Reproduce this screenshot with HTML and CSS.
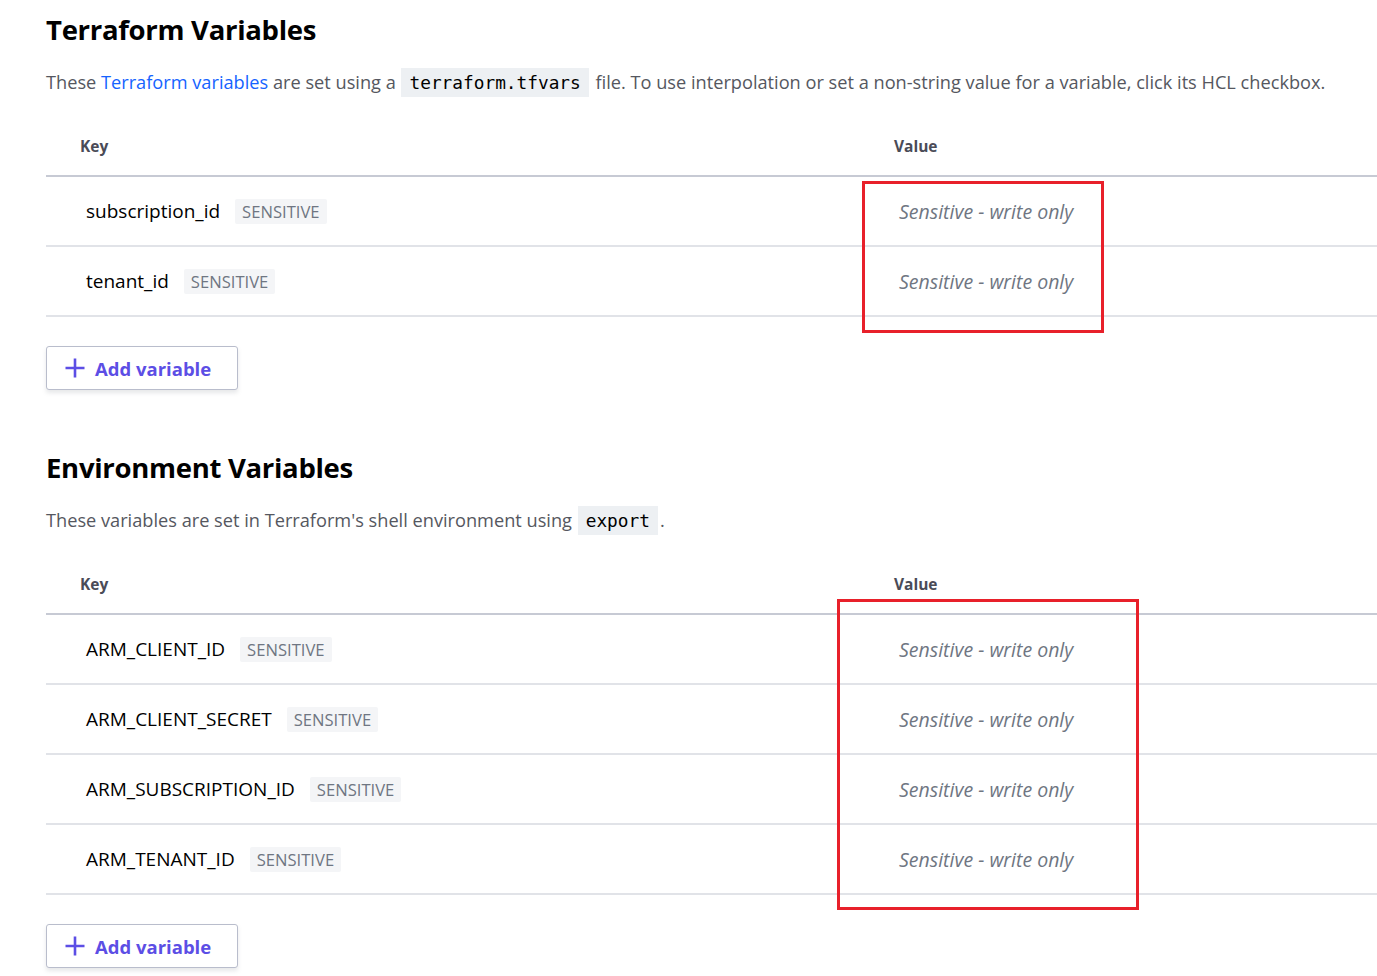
FILE: index.html
```html
<!DOCTYPE html>
<html>
<head>
<meta charset="utf-8">
<link rel="stylesheet" href="styles.css">
</head>
<body>
<div class="page">
  <section class="section s1">
    <h2 class="title">Terraform Variables</h2>
    <p class="desc">These <a class="link" href="#">Terraform variables</a> are set using a <code class="code">terraform.tfvars</code> file. To use interpolation or set a non-string value for a variable, click its HCL checkbox.</p>
    <div class="table-wrap">
      <div class="thead">
        <div class="th th-key">Key</div>
        <div class="th th-val">Value</div>
      </div>
      <div class="row">
        <div class="cell-key"><span class="key">subscription_id</span><span class="badge">SENSITIVE</span></div>
        <div class="cell-val">Sensitive - write only</div>
      </div>
      <div class="row">
        <div class="cell-key"><span class="key">tenant_id</span><span class="badge">SENSITIVE</span></div>
        <div class="cell-val">Sensitive - write only</div>
      </div>
      <div class="highlight h1"></div>
    </div>
    <button class="btn"><svg class="plus" width="20" height="20" viewBox="0 0 20 20"><path d="M10 0.5v19M0.5 10h19" stroke="currentColor" stroke-width="2.6" fill="none"/></svg><span>Add variable</span></button>
  </section>

  <section class="section s2">
    <h2 class="title">Environment Variables</h2>
    <p class="desc">These variables are set in Terraform's shell environment using <code class="code">export</code>.</p>
    <div class="table-wrap">
      <div class="thead">
        <div class="th th-key">Key</div>
        <div class="th th-val">Value</div>
      </div>
      <div class="row">
        <div class="cell-key"><span class="key">ARM_CLIENT_ID</span><span class="badge">SENSITIVE</span></div>
        <div class="cell-val">Sensitive - write only</div>
      </div>
      <div class="row">
        <div class="cell-key"><span class="key">ARM_CLIENT_SECRET</span><span class="badge">SENSITIVE</span></div>
        <div class="cell-val">Sensitive - write only</div>
      </div>
      <div class="row">
        <div class="cell-key"><span class="key">ARM_SUBSCRIPTION_ID</span><span class="badge">SENSITIVE</span></div>
        <div class="cell-val">Sensitive - write only</div>
      </div>
      <div class="row">
        <div class="cell-key"><span class="key">ARM_TENANT_ID</span><span class="badge">SENSITIVE</span></div>
        <div class="cell-val">Sensitive - write only</div>
      </div>
      <div class="highlight h2"></div>
    </div>
    <button class="btn"><svg class="plus" width="20" height="20" viewBox="0 0 20 20"><path d="M10 0.5v19M0.5 10h19" stroke="currentColor" stroke-width="2.6" fill="none"/></svg><span>Add variable</span></button>
  </section>
</div>
</body>
</html>
```

FILE: styles.css
```css
* { box-sizing: border-box; }
html, body { margin: 0; padding: 0; background: #fff; }
body {
  font-family: "Open Sans", "Noto Sans", sans-serif;
  color: #000;
  overflow: hidden;
  width: 1377px;
  height: 976px;
}
.page {
  padding-left: 46px;
  padding-top: 10px;
}
.section { display: flex; flex-direction: column; align-items: flex-start; }
.s2 { margin-top: 58px; }
.title {
  margin: 0;
  font-size: 27.5px;
  font-weight: 700;
  line-height: 40px;
  letter-spacing: -0.3px;
}
.desc {
  margin: 16px 0 0;
  font-size: 18.2px;
  line-height: 32px;
  color: #555760;
  white-space: nowrap;
}
.link { color: #1563ff; text-decoration: none; }
.code {
  font-family: "DejaVu Sans Mono", monospace;
  font-size: 17.8px;
  color: #000;
  background: #edf0f3;
  padding: 4px 8px;
  margin: 0 2px 0 1px;
}
.table-wrap {
  position: relative;
  width: 1331px;
  margin-top: 29px;
}
.thead {
  display: grid;
  grid-template-columns: 848px 1fr;
  height: 49px;
  align-items: end;
  padding-bottom: 18px;
  border-bottom: 2px solid #c7cad4;
  font-size: 15.5px;
  line-height: 21px;
  font-weight: 700;
  color: #4a4b57;
}
.th-key { padding-left: 34px; }
.row {
  display: grid;
  grid-template-columns: 848px 1fr;
  height: 70px;
  align-items: center;
  border-bottom: 2px solid #e1e3e8;
}
.cell-key { padding-left: 40px; display: flex; align-items: center; }
.key { font-size: 19px; color: #000; }
.badge {
  margin-left: 15px;
  background: #f4f5f7;
  color: #6f7682;
  font-size: 16.6px;
  padding: 0 7px;
  height: 25px;
  line-height: 25px;
  border-radius: 2px;
}
.cell-val {
  padding-left: 5px;
  font-style: italic;
  font-size: 19.5px;
  color: #6f7682;
}
.highlight {
  position: absolute;
  border: 3px solid #e8202a;
}
.h1 { left: 816px; top: 53px; width: 242px; height: 152px; }
.h2 { left: 791px; top: 33px; width: 302px; height: 311px; }
.btn {
  margin-top: 29px;
  display: flex;
  align-items: center;
  gap: 10px;
  width: 192px;
  height: 44px;
  padding: 0 0 0 18px;
  background: #fff;
  border: 1px solid #b9bdcc;
  border-radius: 3px;
  box-shadow: 0 3px 4px rgba(120, 125, 140, 0.18);
  color: #5c4ee5;
  font-family: "Open Sans", "Noto Sans", sans-serif;
  font-size: 18.5px;
  font-weight: 700;
}
.plus { flex: none; }
```
